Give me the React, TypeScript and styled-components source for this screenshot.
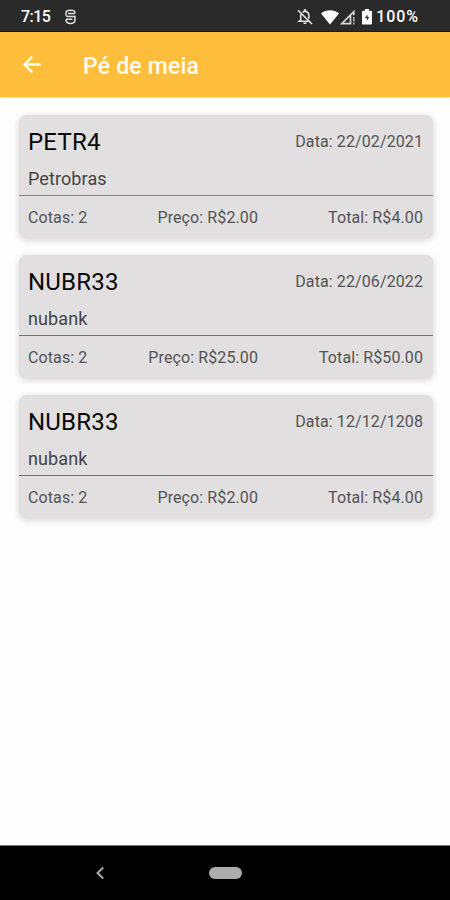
import React from 'react';
import styled, { createGlobalStyle } from 'styled-components';

const GlobalStyle = createGlobalStyle`
  * { box-sizing: border-box; }
  body { margin: 0; background: #fff; font-family: Roboto, sans-serif; }
`;

const Screen = styled.div`
  width: 450px;
  height: 900px;
  display: flex;
  flex-direction: column;
  background: #fefefe;
  overflow: hidden;
`;

const StatusBar = styled.header`
  height: 32px;
  flex: none;
  display: flex;
  align-items: center;
  padding: 3px 31px 0 21px;
  background: #2a2a2a;
  border-bottom: 1px solid #151926;
  color: #fff;
`;

const StatusText = styled.span<{ $spacing: number }>`
  font-size: 16px;
  line-height: 20px;
  font-weight: 500;
  letter-spacing: ${(p) => p.$spacing}px;
`;

const Glyph = styled.svg<{ $left?: number }>`
  display: block;
  flex: none;
  margin-left: ${(p) => p.$left ?? 0}px;
`;

const StatusIcons = styled.div`
  display: flex;
  align-items: center;
  margin-left: auto;
`;

const AppBar = styled.div`
  height: 65px;
  flex: none;
  display: flex;
  align-items: center;
  padding-left: 20px;
  background: #febe3c;
  color: #fffdf0;
  box-shadow: 0 1px 2px rgba(0, 0, 0, 0.14);
`;

const Title = styled.h1`
  margin: 4px 0 0 39px;
  font-size: 23px;
  line-height: 28px;
  font-weight: 500;
  letter-spacing: 0.2px;
`;

const List = styled.main`
  flex: 1;
  display: flex;
  flex-direction: column;
  gap: 17px;
  padding: 18px 17px 0 19px;
`;

const Card = styled.article`
  height: 123px;
  display: flex;
  flex-direction: column;
  border-radius: 7px;
  background: #e1dfe0;
  box-shadow: 0 2px 7px rgba(0, 0, 0, 0.18);
`;

const Summary = styled.div<{ $line: string }>`
  height: 81px;
  padding: 11px 10px 0 9px;
  border-bottom: 1px solid ${(p) => p.$line};
`;

const Row = styled.div`
  display: flex;
  justify-content: space-between;
  align-items: center;
`;

const Ticker = styled.h2`
  margin: 0;
  font-size: 24px;
  line-height: 32px;
  font-weight: 400;
  letter-spacing: 0.2px;
  color: #080808;
`;

const Company = styled.div`
  margin-top: 9px;
  font-size: 18px;
  line-height: 24px;
  letter-spacing: 0.1px;
  color: #454545;
`;

const Detail = styled.span`
  font-size: 16px;
  line-height: 20px;
  letter-spacing: 0.1px;
  color: #545354;
`;

const Figures = styled.div`
  height: 42px;
  display: grid;
  grid-template-columns: 90px 140px 165px;
  align-items: center;
  padding: 1px 10px 0 9px;

  & > :not(:first-child) {
    text-align: right;
  }
`;

const NavBar = styled.footer`
  height: 55px;
  flex: none;
  display: flex;
  align-items: center;
  padding-left: 94px;
  background: #000;
  border-top: 1px solid #777;
`;

const HomePill = styled.div`
  width: 33px;
  height: 12px;
  margin-left: 103px;
  border-radius: 6px;
  background: #adadad;
`;

interface Holding {
  ticker: string;
  company: string;
  date: string;
  shares: number;
  price: string;
  total: string;
  line: string;
}

const holdings: Holding[] = [
  { ticker: 'PETR4', company: 'Petrobras', date: '22/02/2021', shares: 2, price: '2.00', total: '4.00', line: '#848484' },
  { ticker: 'NUBR33', company: 'nubank', date: '22/06/2022', shares: 2, price: '25.00', total: '50.00', line: '#707070' },
  { ticker: 'NUBR33', company: 'nubank', date: '12/12/1208', shares: 2, price: '2.00', total: '4.00', line: '#707070' },
];

const HoldingCard = ({ item }: { item: Holding }) => (
  <Card>
    <Summary $line={item.line}>
      <Row>
        <Ticker>{item.ticker}</Ticker>
        <Detail>Data: {item.date}</Detail>
      </Row>
      <Company>{item.company}</Company>
    </Summary>
    <Figures>
      <Detail>Cotas: {item.shares}</Detail>
      <Detail>Preço: R${item.price}</Detail>
      <Detail>Total: R${item.total}</Detail>
    </Figures>
  </Card>
);

export default function App() {
  return (
    <>
      <GlobalStyle />
      <Screen>
        <StatusBar>
          <StatusText $spacing={-0.55}>7:15</StatusText>
          <Glyph $left={14} width="13" height="16" viewBox="0 0 13 16" fill="none" stroke="#ddd" strokeWidth="1.5">
            <path d="M11 4.2V3.4C11 1.8 9.6 1.2 6.5 1.2S2 1.8 2 3.6v2.2c0 1 .6 1.6 1.8 1.6H11v3.2c0 2.6-1.6 4-4.5 4S2 13.2 2 10.6" />
            <path d="M4 4.4h7M2 10.2h6.4" />
          </Glyph>
          <StatusIcons>
            <Glyph width="16" height="16" viewBox="0 0 16 16" fill="none" stroke="#e6e6e6" strokeWidth="1.6">
              <path d="M1 1.2 15 15M3.7 5.3V11L2.2 12.3H11.5M5.5 3.5C6 2.9 6.7 2.6 7.5 2.5V1h1v1.5c2.2.4 3.4 2 3.4 4.2v3" />
              <path d="M6.5 14.2h3" />
            </Glyph>
            <Glyph $left={8} width="18" height="15" viewBox="0 0 18 15" fill="#fff">
              <path d="M0 3.6C5-.8 13-.8 18 3.6L9 14.6Z" />
            </Glyph>
            <Glyph $left={1} width="15" height="15" viewBox="0 0 15 15" fill="none" stroke="#d8d8d8" strokeWidth="1.7">
              <path d="M13.8 5.2V1.7L1.8 13.7H10.5V5.2" />
              <path d="M13.8 7v4.5M13.8 12.6v1.8" stroke="#aaa" />
            </Glyph>
            <Glyph $left={7} width="10" height="16" viewBox="0 0 10 16">
              <path d="M3 0h4v1.7h1.8c.7 0 1.2.5 1.2 1.2v11.5c0 .7-.5 1.2-1.2 1.2H1.2c-.7 0-1.2-.5-1.2-1.2V2.9c0-.7.5-1.2 1.2-1.2H3Z" fill="#fff" />
              <path d="M5.4 5.2 3 8.9h1.8v3l2.4-4H5.4Z" fill="#2a2a2a" />
            </Glyph>
            <Glyph width="4" height="1" />
            <StatusText $spacing={0.9}>100%</StatusText>
          </StatusIcons>
        </StatusBar>
        <AppBar>
          <Glyph width="24" height="24" viewBox="0 0 24 24" fill="none" stroke="currentColor" strokeWidth="2.4">
            <path d="M21 11.5H4.5M12.4 3.6 4.4 11.5l8 7.9" />
          </Glyph>
          <Title>Pé de meia</Title>
        </AppBar>
        <List>
          {holdings.map((item) => (
            <HoldingCard key={item.date} item={item} />
          ))}
        </List>
        <NavBar>
          <Glyph width="12" height="14" viewBox="0 0 12 14" fill="none" stroke="#aaa" strokeWidth="2">
            <path d="M9.2 1.5 3.5 7l5.7 5.5" />
          </Glyph>
          <HomePill />
        </NavBar>
      </Screen>
    </>
  );
}
